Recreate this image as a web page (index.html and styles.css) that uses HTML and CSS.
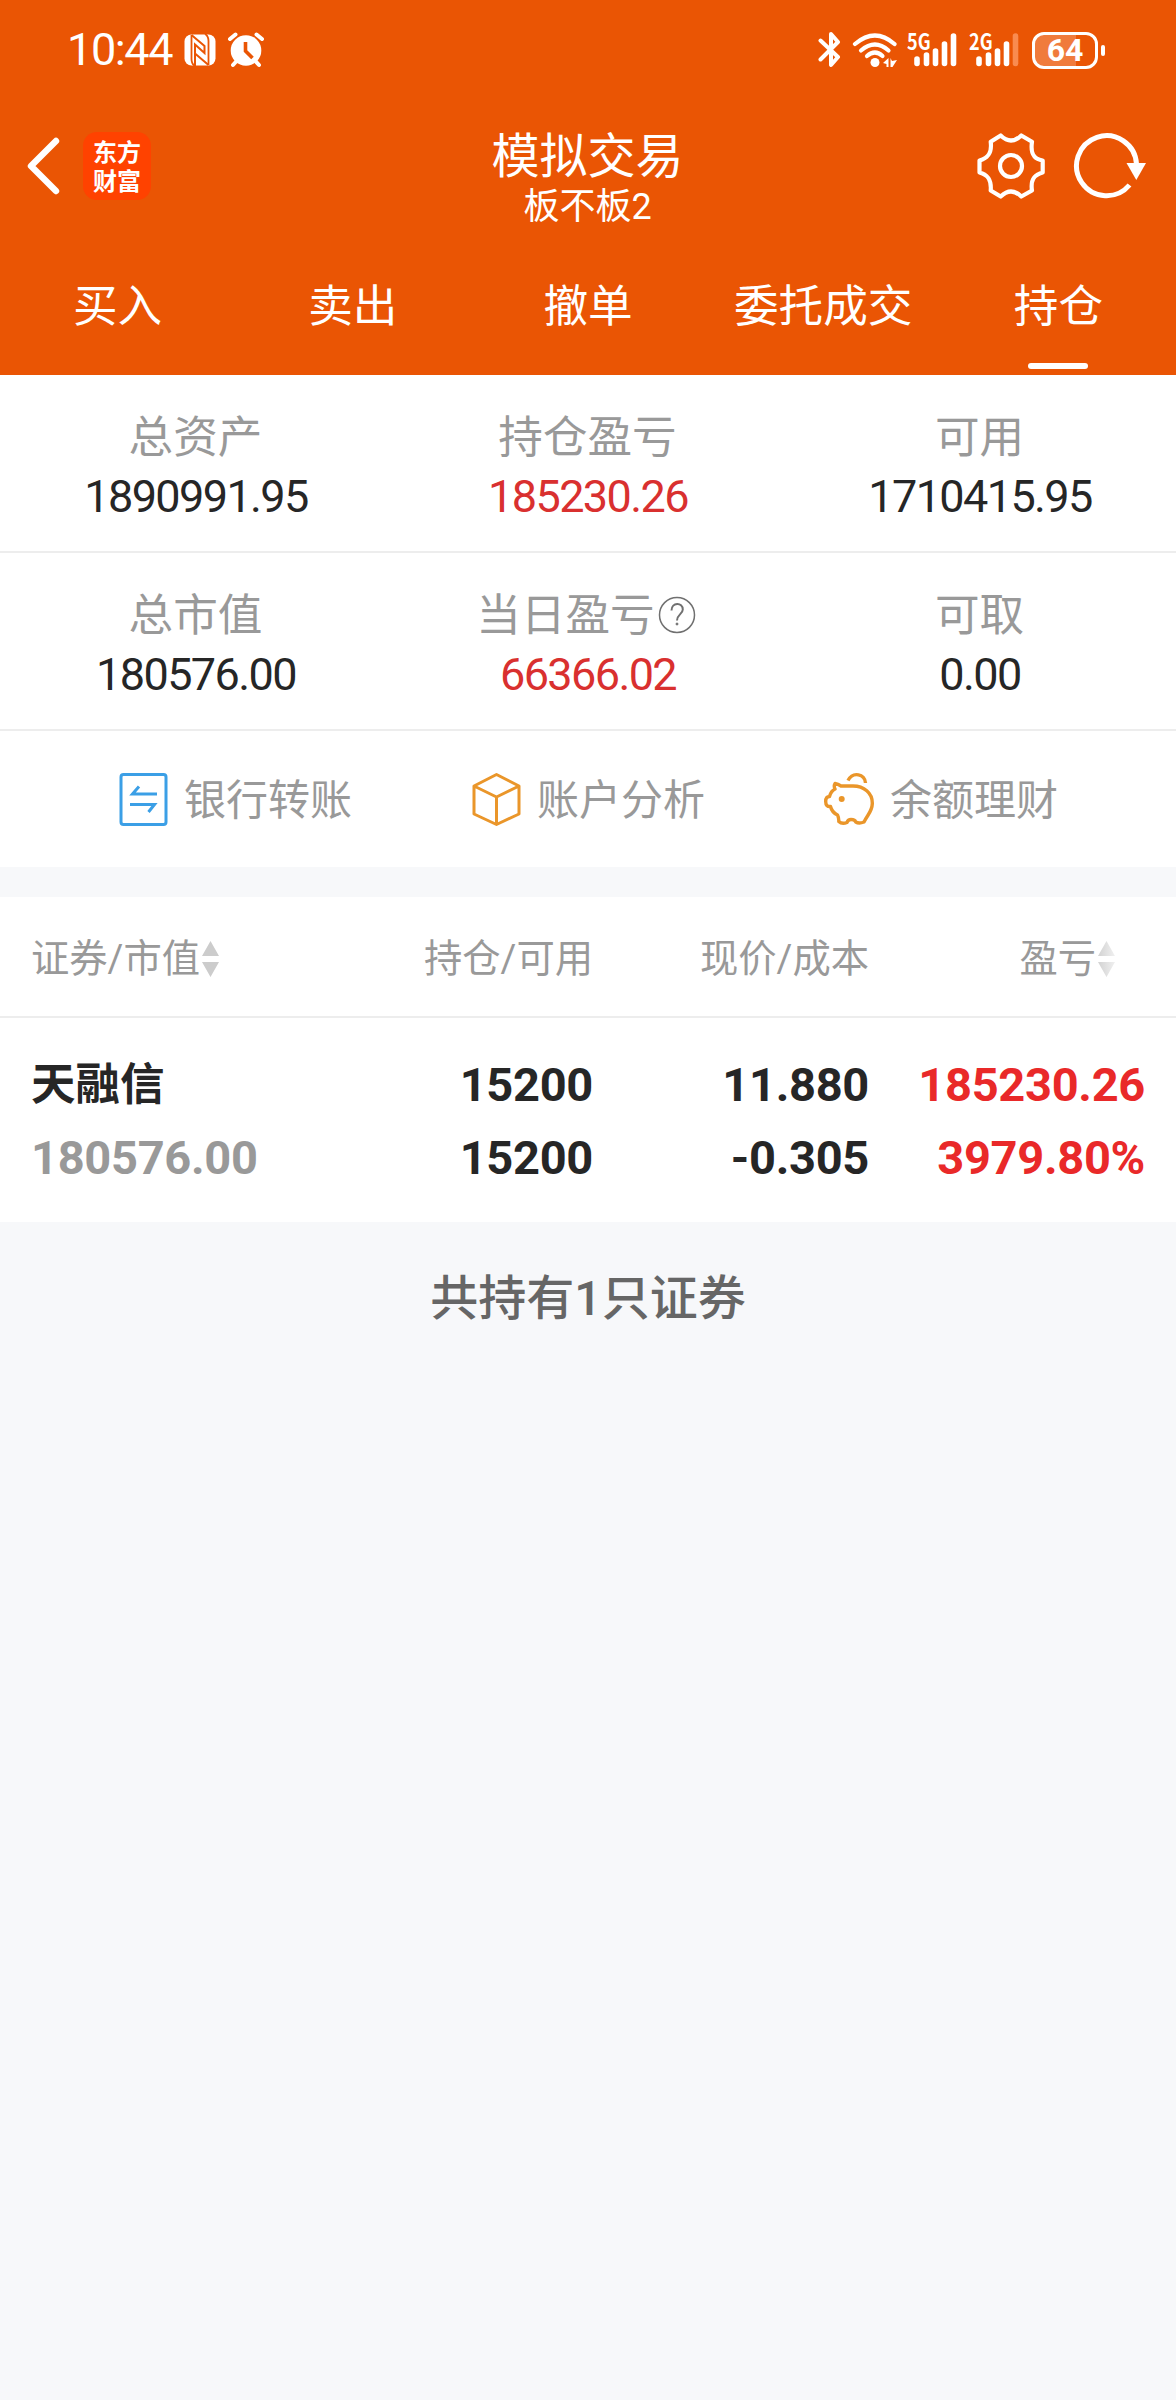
FILE: index.html
```html
<!DOCTYPE html>
<html lang="zh-CN">
<head>
<meta charset="utf-8">
<title>模拟交易</title>
<link rel="stylesheet" href="styles.css">
</head>
<body>
<header class="header">
  <div class="status">
    <div class="status-left">
      <span class="clock">10:44</span>
      <svg class="nfc" width="32" height="32" viewBox="0 0 32 32"><rect x="0.5" y="0.5" width="31" height="31" rx="7" fill="#fff"/><path d="M7.500 1V25Q7.500 30 11 32M24.500 31V7Q24.500 2 21 0" fill="none" stroke="#ea5504" stroke-width="1.800"/><path d="M7.500 1L20.500 12V19L11 10.500V32M24.500 31L11 19.500" fill="none" stroke="#ea5504" stroke-width="2"/></svg>
      <svg width="38" height="36" viewBox="0 0 38 36"><circle cx="19" cy="18.500" r="15.300" fill="#fff"/><path d="M3 7L8.500 2.500M35 7L29.500 2.500M6 33L10 28.500M32 33L28 28.500" stroke="#fff" stroke-width="4" stroke-linecap="round"/><path d="M18.500 10V19L25.500 26" fill="none" stroke="#ea5504" stroke-width="3.600"/></svg>
    </div>
    <div class="status-right">
      <svg class="bt" width="24" height="38" viewBox="0 0 24 38"><path d="M2.500 9.500L20 26L13 34V3L20 11L2.500 28.500" fill="none" stroke="#fff" stroke-width="4" stroke-linejoin="round" stroke-linecap="round"/></svg>
      <svg class="wifi" width="46" height="36" viewBox="0 0 46 36"><g fill="none" stroke="#fff" stroke-width="4.200" stroke-linecap="round"><path d="M3 12Q23-5 42.500 12"/><path d="M9 18.500Q23 6.500 36.500 18.500"/><path d="M15 24Q23 17 30.500 24"/></g><circle cx="23" cy="30.500" r="4.500" fill="#fff"/><path d="M36.500 26V35H34.500V32L31 31ZM38.500 26L40 29L45 28L40.500 35H38.500Z" fill="#fff"/></svg>
      <div class="signal"><span class="net">5G</span><svg width="50" height="36" viewBox="0 0 50 36"><g stroke="#fff" stroke-width="5.600" stroke-linecap="round"><path d="M10 27V31.500M19.500 23V31.500M28.500 19V31.500M37.500 12V31.500M46.500 4V31.500"/></g></svg></div>
      <div class="signal"><span class="net">2G</span><svg width="50" height="36" viewBox="0 0 50 36"><g stroke="#fff" stroke-width="5.600" stroke-linecap="round"><path d="M10 27V31.500M19.500 23V31.500M28.500 19V31.500M37.500 12V31.500"/><path d="M46.500 4V31.500" stroke="#f98b50"/></g></svg></div>
      <div class="battery"><span class="battery-body">64</span><span class="battery-tip"></span></div>
    </div>
  </div>
  <div class="titlebar">
    <div class="title-left">
      <svg width="36" height="60" viewBox="0 0 36 60"><path d="M31 5L6 30L31 55" fill="none" stroke="#fff" stroke-width="6.400" stroke-linecap="round" stroke-linejoin="round"/></svg>
      <div class="logo"><span>东方</span><span>财富</span></div>
    </div>
    <div class="title-text"><h1>模拟交易</h1><p>板不板2</p></div>
    <div class="title-right">
      <svg width="72" height="72" viewBox="0 0 72 72"><g fill="none" stroke="#fff" stroke-width="4.200" stroke-linejoin="round"><path d="M25.700 5.500Q36 15.500 46.300 5.500L57 11.700C55.500 22 57.500 29 67.700 30.500V42.500C58 45 55.500 51 57 60.500L46.300 66.500Q36 56.500 25.700 66.500L15.700 60.500C16.500 51 14 45 4.500 42.500V30.500C14 28 17 22 15.700 11.700Z"/><circle cx="36" cy="36" r="11"/></g></svg>
      <svg width="74" height="72" viewBox="0 0 74 72"><path d="M56.500 55A30 30 0 1 1 63.500 34" fill="none" stroke="#fff" stroke-width="5"/><path d="M53.500 33H73L63.300 50Z" fill="#fff"/></svg>
    </div>
  </div>
  <nav class="tabs">
    <a class="tab">买入</a><a class="tab">卖出</a><a class="tab">撤单</a><a class="tab">委托成交</a><a class="tab active">持仓</a>
  </nav>
</header>

<section class="summary">
  <div class="stats">
    <div class="stat"><span class="label">总资产</span><span class="value">1890991.95</span></div>
    <div class="stat"><span class="label">持仓盈亏</span><span class="value up">185230.26</span></div>
    <div class="stat"><span class="label">可用</span><span class="value">1710415.95</span></div>
  </div>
  <div class="stats">
    <div class="stat"><span class="label">总市值</span><span class="value">180576.00</span></div>
    <div class="stat"><span class="label">当日盈亏<svg class="help" width="38" height="38" viewBox="0 0 38 38" fill="none" stroke="#707070" stroke-width="1.500"><circle cx="19" cy="19" r="17.500"/><path d="M13.500 14.500C13.500 6 24.800 6 24.800 13.500C24.800 18 19 18.500 19 24.500" stroke-width="2"/><circle cx="19" cy="28" r="1" fill="#707070" stroke-width="1"/></svg></span><span class="value up">66366.02</span></div>
    <div class="stat"><span class="label">可取</span><span class="value">0.00</span></div>
  </div>
  <div class="actions">
    <a class="action"><svg width="50" height="54" viewBox="0 0 50 54" fill="none" stroke="#3b9fe6" stroke-width="3"><rect x="3" y="2.500" width="45" height="50" rx="2.500"/><path d="M39 22H14.500L21 14.500M12 32.500H36.500L30.500 40"/></svg><span>银行转账</span></a>
    <a class="action"><svg width="50" height="54" viewBox="0 0 50 54" fill="none" stroke="#ea962a" stroke-width="3" stroke-linejoin="round"><path d="M25.500 2.500L48 14V42L25.500 52.500L3 42V14ZM3 14L25.500 25L48 14M25.500 25V52.500"/></svg><span>账户分析</span></a>
    <a class="action"><svg width="50" height="54" viewBox="2 3 50 54" fill="none" stroke="#ea962a" stroke-width="3.400" stroke-linejoin="round"><path d="M13 14.500Q16 15 19 17H31C42 17 50.300 24 50.300 34C50.500 42 46 45 42 53Q37 55 33.700 53Q33 50.500 29 50.500Q26 50.500 25 53.500Q20 55.500 16.800 52.500Q17 49 15.500 46Q10 43.500 8.500 37.500Q3.700 38 3.700 32.500Q3.700 27.500 7.500 27.500Q9 22 13 20Q11.500 17 13 14.500Z"/><path d="M26 11.500C31 2 43 5 43.500 14"/><circle cx="19.700" cy="30" r="3" fill="#ea962a" stroke="none"/></svg><span>余额理财</span></a>
  </div>
</section>

<section class="holdings">
  <div class="row head">
    <span class="sortable">证券/市值<svg width="17" height="36" viewBox="0 0 17 36" fill="#ccc"><path d="M8.500 0L17 15H0ZM0 21H17L8.500 36Z"/></svg></span>
    <span>持仓/可用</span><span>现价/成本</span>
    <span class="sortable last">盈亏<svg width="17" height="36" viewBox="0 0 17 36"><defs><linearGradient id="fade"><stop offset="0" stop-color="#d2d2d2"/><stop offset="1" stop-color="#f0f0f0"/></linearGradient></defs><path fill="url(#fade)" d="M8.500 0L17 15H0ZM0 21H17L8.500 36Z"/></svg></span>
  </div>
  <div class="position">
    <div class="row"><span class="name">天融信</span><span>15200</span><span>11.880</span><span class="gain">185230.26</span></div>
    <div class="row"><span class="muted">180576.00</span><span>15200</span><span>-0.305</span><span class="gain">3979.80%</span></div>
  </div>
</section>
<p class="total">共持有1只证券</p>
</body>
</html>
```

FILE: styles.css
```css
* { box-sizing: border-box; margin: 0; padding: 0; }
body {
  width: 1176px;
  min-height: 2400px;
  background: #f7f8fa;
  color: #262626;
  font-family: Roboto, "Noto Sans CJK SC", sans-serif;
}
svg { display: block; flex: none; }

.header { height: 375px; background: #ea5504; color: #fff; }
.status { display: flex; justify-content: space-between; height: 100px; padding: 0 71px 0 67px; }
.status-left, .status-right { display: flex; align-items: center; }
.clock { width: 117px; font-size: 45px; line-height: 100px; font-weight: 400; letter-spacing: -1.400px; }
.nfc { margin-right: 11px; }
.bt { margin-right: 10px; }
.wifi { margin-right: 9px; }
.signal { position: relative; margin-right: 12px; }
.net { position: absolute; left: 0; top: -3px; font: 700 22px/22px "Noto Sans CJK SC", sans-serif; transform: scaleX(.82); transform-origin: 0 0; }
.battery { display: flex; align-items: center; gap: 3px; margin-left: 1px; }
.battery-body { width: 66px; height: 37px; border: 3px solid #fff; border-radius: 12px; background: linear-gradient(90deg, #f07b3c 68%, transparent 68%); font-size: 32px; font-weight: 700; line-height: 31px; text-align: center; }
.battery-tip { width: 4px; height: 11px; border-radius: 2px; background: #fff; }

.titlebar { display: grid; grid-template-columns: 1fr auto 1fr; height: 132px; }
.title-left { display: flex; align-items: center; gap: 22px; padding-left: 25px; }
.logo { display: flex; flex-direction: column; align-items: center; width: 68px; height: 68px; padding-top: 4px; border-radius: 14px; background: #ff4200; font: 700 24px/29px "Noto Sans CJK SC", sans-serif; }
.title-text { text-align: center; padding: 30px 1px 0 0; }
.title-text h1 { font-size: 48px; line-height: 54px; font-weight: 400; }
.title-text p { font-size: 36px; line-height: 46px; }
.title-right { display: flex; align-items: center; justify-content: flex-end; gap: 26px; padding-right: 29px; }

.tabs { display: grid; grid-template-columns: repeat(5, 1fr); height: 143px; }
.tab { display: flex; flex-direction: column; align-items: center; justify-content: space-between; padding: 45px 0 6px; font-size: 44.600px; line-height: 60px; }
.active::after { content: ""; width: 60px; height: 6px; border-radius: 3px; background: #fff; }

.summary { background: #fff; }
.stats { display: grid; grid-template-columns: repeat(3, 1fr); height: 178px; padding-top: 34px; border-bottom: 2px solid #ededed; }
.stat { display: flex; flex-direction: column; align-items: center; }
.label { display: flex; align-items: center; padding-right: 1px; font-size: 44.600px; line-height: 58px; color: #999; }
.help { margin: 0 3px 2px 3px; }
.value { font-size: 45px; line-height: 60px; letter-spacing: -1.600px; }
.up { color: #d9302f; }
.actions { display: grid; grid-template-columns: repeat(3, 353px); justify-content: center; height: 136px; }
.action { display: flex; align-items: center; justify-content: center; gap: 16px; font-size: 42px; line-height: 60px; color: #999; }
.action span { padding-top: 4px; }

.holdings { margin-top: 30px; background: #fff; }
.row { display: grid; grid-template-columns: 286px 276px 276px 276px; padding-left: 31px; text-align: right; }
.row > :first-child { text-align: left; }
.head { height: 121px; padding-top: 4px; border-bottom: 2px solid #ededed; color: #999; font-size: 38.300px; line-height: 116px; }
.sortable { display: flex; align-items: center; gap: 2px; }
.last { justify-content: flex-end; padding-right: 30px; }
.position { height: 204px; padding-top: 30px; font-size: 47px; line-height: 73px; font-weight: 700; letter-spacing: -0.300px; }
.name { padding-top: 2px; font-size: 44.500px; line-height: 71px; letter-spacing: 0; }
.muted { color: #999; }
.gain { color: #e92929; }
.total { padding-top: 42px; font-size: 48px; line-height: 70px; font-weight: 500; text-align: center; color: #666; }
```
